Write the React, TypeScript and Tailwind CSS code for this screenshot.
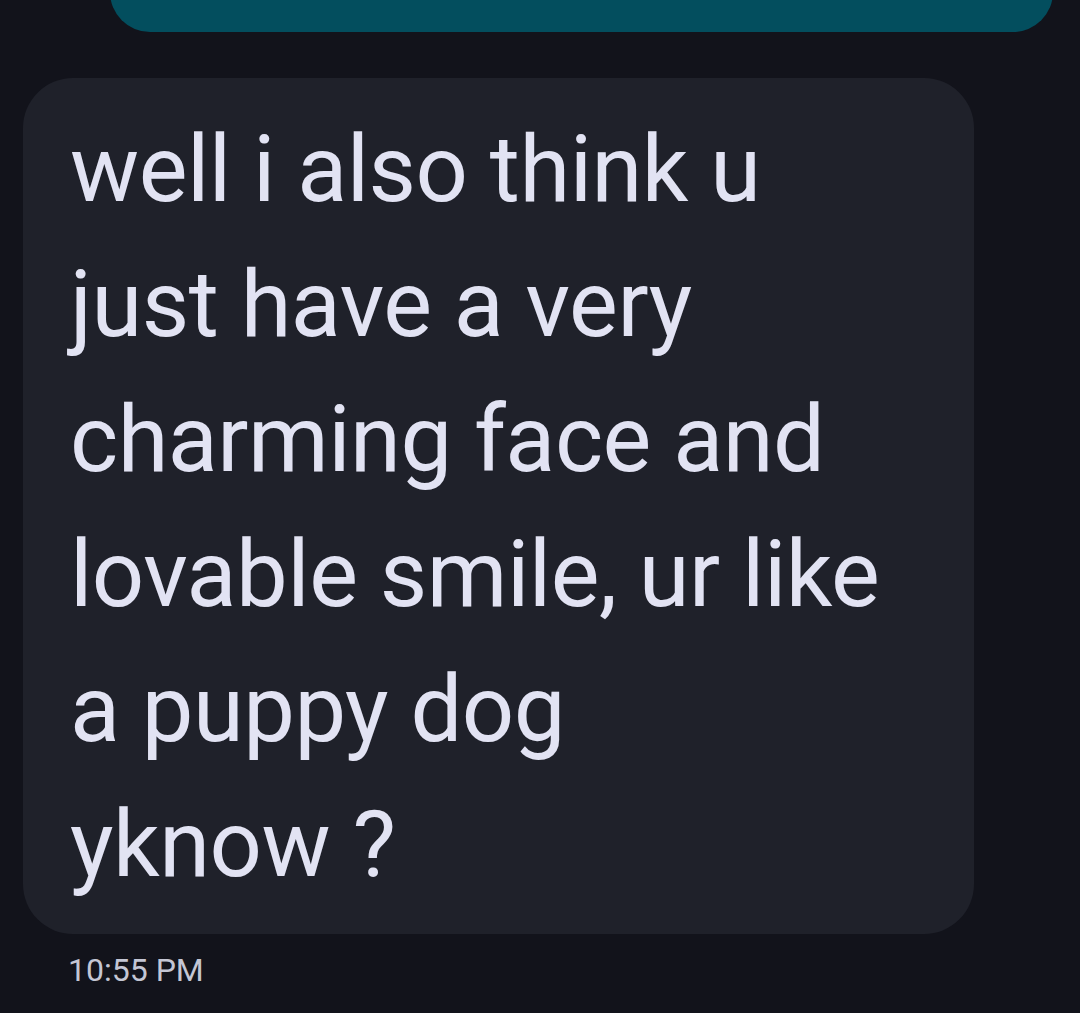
const lines = [
  "well i also think u",
  "just have a very",
  "charming face and",
  "lovable smile, ur like",
  "a puppy dog",
  "yknow ?",
];

export default function App() {
  return (
    <div
      className="w-[1080px] h-[1013px] overflow-hidden bg-[#12131b] flex flex-col"
      style={{ fontFamily: "Roboto, 'Noto Sans', sans-serif" }}
    >
      {/* sent bubble, cut off at top */}
      <div className="ml-[110px] mr-[27px] mt-[-48px] h-[80px] rounded-[44px] bg-[#034e5e] shrink-0" />

      <div className="ml-[23px] mt-[46px] w-[951px] h-[856px] rounded-[50px] bg-[#1f212a] pl-[47px] pt-[24px] shrink-0">
        <p className="text-[#e2e3f3] text-[92px] leading-[135px] tracking-[-0.5px]">
          {lines.map((l, i) => (
            <span key={i} className="block whitespace-nowrap">
              {l}
            </span>
          ))}
        </p>
      </div>

      <div className="ml-[68px] mt-[16px] text-[32px] leading-[40px] text-[#c4c6d4]">
        10:55 PM
      </div>
    </div>
  );
}
